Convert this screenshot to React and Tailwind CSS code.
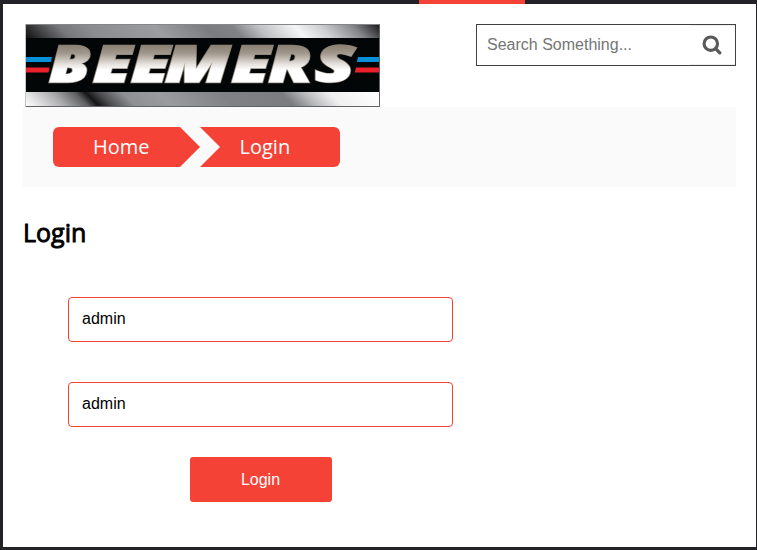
const letters = [
  { ch: 'B', x: 49, w: 41 },
  { ch: 'E', x: 93, w: 38.5 },
  { ch: 'E', x: 131, w: 38.5 },
  { ch: 'M', x: 165, w: 65 },
  { ch: 'E', x: 231.5, w: 38.5 },
  { ch: 'R', x: 268.5, w: 43 },
  { ch: 'S', x: 315, w: 39.5 },
];

const letterClass = "font-['Open_Sans',sans-serif] text-[49px] font-extrabold italic";

function Logo() {
  return (
    <svg className="block" width="355" height="83" viewBox="25 24 355 83" role="img" aria-label="Beemers">
      <defs>
        <linearGradient id="metalTop" gradientUnits="userSpaceOnUse" x1="26" y1="38" x2="210" y2="-146">
          <stop offset="0" stopColor="#101010" />
          <stop offset="0.03" stopColor="#2a2a2b" />
          <stop offset="0.12" stopColor="#77787b" />
          <stop offset="0.2" stopColor="#8b8c90" />
          <stop offset="0.38" stopColor="#9b9da1" />
          <stop offset="0.52" stopColor="#7b7c80" />
          <stop offset="0.59" stopColor="#808285" />
          <stop offset="0.66" stopColor="#bfc0c2" />
          <stop offset="0.76" stopColor="#f4f5f5" />
          <stop offset="0.83" stopColor="#d0d1d3" />
          <stop offset="0.92" stopColor="#85868a" />
          <stop offset="0.98" stopColor="#303033" />
          <stop offset="1" stopColor="#101010" />
        </linearGradient>
        <linearGradient id="metalBottom" gradientUnits="userSpaceOnUse" x1="11" y1="92" x2="195.500" y2="-92.500">
          <stop offset="0" stopColor="#ffffff" />
          <stop offset="0.04" stopColor="#e4e4e5" />
          <stop offset="0.11" stopColor="#a9aaac" />
          <stop offset="0.17" stopColor="#606163" />
          <stop offset="0.2" stopColor="#151515" />
          <stop offset="0.235" stopColor="#4a4b4d" />
          <stop offset="0.3" stopColor="#8e9094" />
          <stop offset="0.4" stopColor="#999b9e" />
          <stop offset="0.57" stopColor="#808184" />
          <stop offset="0.73" stopColor="#7b7c80" />
          <stop offset="0.79" stopColor="#b8b9bb" />
          <stop offset="0.86" stopColor="#f0f0f1" />
          <stop offset="1" stopColor="#ffffff" />
        </linearGradient>
        <linearGradient id="chrome" gradientUnits="userSpaceOnUse" x1="0" y1="46" x2="0" y2="83">
          <stop offset="0" stopColor="#8b8175" />
          <stop offset="0.2" stopColor="#a1988d" />
          <stop offset="0.5" stopColor="#e7e3df" />
          <stop offset="0.65" stopColor="#ffffff" />
          <stop offset="1" stopColor="#ffffff" />
        </linearGradient>
      </defs>
      <rect x="26" y="24" width="354" height="14" fill="url(#metalTop)" />
      <rect x="26" y="92" width="354" height="15" fill="url(#metalBottom)" />
      <rect x="26" y="38" width="354" height="54" fill="#030606" />
      <path d="M26 57h26l-1 5H26zM358 57h22v5h-23.200z" fill="#0690d8" />
      <path d="M26 67.500h23.500l-1 5H26zM356 67.500h24v5h-25.200z" fill="#ec2028" />
      <g fill="url(#chrome)" stroke="#8b8175" strokeWidth="2.4" strokeLinejoin="miter" className="[paint-order:stroke]">
        {letters.map(({ ch, x, w }, i) => (
          <text key={i} x={x} y="82.300" textLength={w} lengthAdjust="spacingAndGlyphs" className={letterClass}>
            {ch}
          </text>
        ))}
      </g>
      <g fill="none" stroke="url(#chrome)" strokeWidth="1.2" aria-hidden="true">
        {letters.map(({ ch, x, w }, i) => (
          <text key={i} x={x} y="82.300" textLength={w} lengthAdjust="spacingAndGlyphs" className={letterClass}>
            {ch}
          </text>
        ))}
      </g>
      <path d="M25 24.500h355" stroke="#85868a" />
      <path d="M25.500 24v83" stroke="#c5c5c5" />
      <path d="M26 106.500h354M379.500 24v83" stroke="#626366" />
    </svg>
  );
}

function SearchIcon() {
  return (
    <svg className="block" width="20" height="20" viewBox="702 34.500 20 20" fill="none" stroke="#595959">
      <circle cx="710.800" cy="43.200" r="6.700" strokeWidth="3.100" />
      <path d="M715.800 48.300l4 4" strokeWidth="3.300" strokeLinecap="round" />
    </svg>
  );
}

function Field() {
  return (
    <input
      type="text"
      defaultValue="admin"
      className="block h-[45px] w-[385px] rounded border border-[#f44336] bg-white px-[13px] pb-0.5 text-base text-black outline-none"
    />
  );
}

export default function App() {
  return (
    <div className="flex h-[550px] w-[757px] flex-col overflow-hidden border-r border-b-3 border-l-3 border-[#232226] bg-white font-['Liberation_Sans',sans-serif]">
      <div className="flex h-1 shrink-0 bg-[#232228]">
        <div className="ml-[416px] w-[106px] bg-[#f44336]" />
      </div>
      <header className="flex items-start justify-between pt-5 pr-5 pl-[22px]">
        <Logo />
        <form className="flex h-[42px] w-[260px] items-center border border-[#414144]">
          <input
            type="text"
            placeholder="Search Something..."
            className="h-10 w-[213px] bg-white px-2.5 text-base outline-none placeholder:text-[#757575]"
          />
          <button type="button" aria-label="Search" className="flex h-10 flex-1 items-center border-y border-[#eeeeee] pl-3">
            <SearchIcon />
          </button>
        </form>
      </header>
      <nav className="mx-5 flex h-20 shrink-0 bg-[#fafafa] px-[30px] pt-5 font-['Open_Sans',sans-serif] text-xl leading-10 text-white">
        <a className="h-10 w-[147px] rounded-l-md bg-[#f44336] pl-10 [clip-path:polygon(0_0,127px_0,100%_50%,127px_100%,0_100%)]">Home</a>
        <a className="h-10 w-[140px] rounded-r-md bg-[#f44336] pl-[39.500px] [clip-path:polygon(0_0,100%_0,100%_100%,0_100%,20px_50%)]">Login</a>
      </nav>
      <h2 className="mt-[29px] ml-5 font-['Open_Sans',sans-serif] text-[25px] leading-8 text-black [-webkit-text-stroke:0.9px_black]">Login</h2>
      <form className="mt-[49px] ml-[65px] flex w-[385px] flex-col">
        <Field />
        <div className="mt-10">
          <Field />
        </div>
        <button type="button" className="mt-[30px] ml-[122px] h-[45px] w-[142px] rounded-[3px] bg-[#f44336] pr-px text-base text-white">
          Login
        </button>
      </form>
    </div>
  );
}
